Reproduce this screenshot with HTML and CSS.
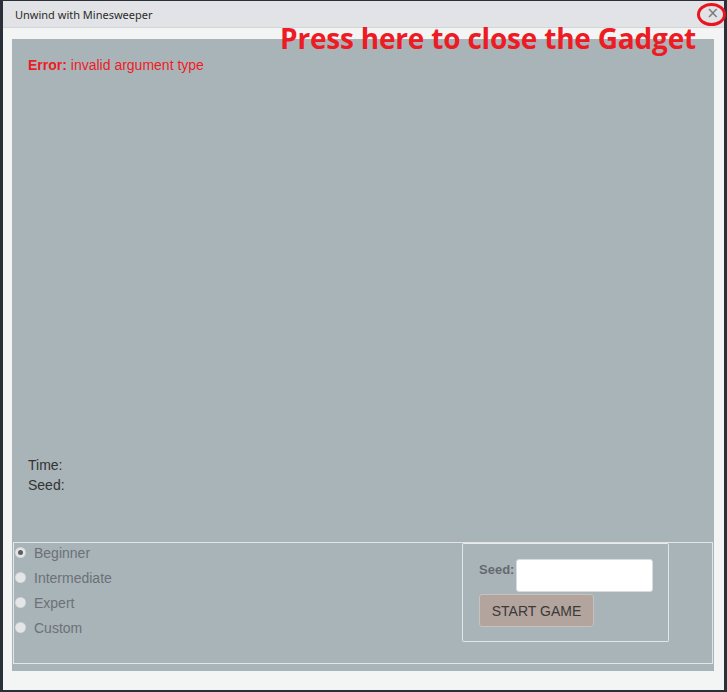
FILE: index.html
```html
<!DOCTYPE html>
<html>
<head>
<meta charset="utf-8">
<link rel="stylesheet" href="styles.css">
</head>
<body>
<div class="screen">
  <div class="dialog">
    <div class="titlebar">
      <span class="title">Unwind with Minesweeper</span>
      <span class="close">×</span>
      <span class="ring"></span>
    </div>
    <div class="hint">Press here to close the Gadget</div>
    <div class="body">
      <div class="panel">
        <div class="board">
          <div class="error"><b>Error:</b> invalid argument type</div>
          <div class="stats">
            <div>Time:</div>
            <div>Seed:</div>
          </div>
        </div>
        <div class="controls">
          <div class="levels">
            <label class="radio"><span class="dot checked"></span>Beginner</label>
            <label class="radio"><span class="dot"></span>Intermediate</label>
            <label class="radio"><span class="dot"></span>Expert</label>
            <label class="radio"><span class="dot"></span>Custom</label>
          </div>
          <div class="start">
            <div class="seedrow">
              <span class="seedlabel">Seed:</span>
              <span class="seedinput"></span>
            </div>
            <div class="btn">START GAME</div>
          </div>
        </div>
      </div>
    </div>
  </div>
</div>
</body>
</html>
```
FILE: styles.css
```css
html, body {
  margin: 0;
  padding: 0;
}
body {
  width: 727px;
  height: 692px;
  overflow: hidden;
  background: #2a3038;
  font-family: "Liberation Sans", Arial, sans-serif;
}
.screen {
  padding: 1px 3px 2px 3px;
  height: 692px;
  box-sizing: border-box;
}
.dialog {
  position: relative;
  background: #f3f4f4;
  height: 100%;
  display: flex;
  flex-direction: column;
}
.titlebar {
  position: relative;
  height: 27px;
  background: #e1e3e6;
  border-bottom: 1px solid #d3d5d8;
  display: flex;
  align-items: center;
  padding-left: 12px;
  box-sizing: border-box;
}
.title {
  font-family: "Noto Sans", "Open Sans", sans-serif;
  font-size: 11px;
  color: #2b2b2b;
}
.close {
  position: absolute;
  right: 5px;
  top: 4px;
  font-family: "DejaVu Sans", sans-serif;
  font-size: 15px;
  line-height: 16px;
  color: #74787c;
}
.ring {
  position: absolute;
  right: -2px;
  top: 2px;
  width: 23px;
  height: 17px;
  border: 3px solid #e8141f;
  border-radius: 50%;
}
.hint {
  position: absolute;
  left: 277px;
  top: 18px;
  font-family: "Open Sans", "Noto Sans", sans-serif;
  font-weight: 700;
  font-size: 28px;
  line-height: 38px;
  color: #ed1c24;
  z-index: 2;
  letter-spacing: -0.2px;
}
.body {
  flex: 1;
  padding: 11px 10px 19px 9px;
  display: flex;
}
.panel {
  flex: 1;
  background: #a9b4b9;
  display: flex;
  flex-direction: column;
  padding: 0 1px 7px 1px;
}
.board {
  flex: 1;
  padding: 18px 0 0 15px;
  display: flex;
  flex-direction: column;
  justify-content: space-between;
  padding-bottom: 47px;
}
.error {
  font-size: 14px;
  color: #ed1c24;
}
.error b {
  font-weight: 700;
}
.stats {
  font-size: 14px;
  color: #333;
  line-height: 20px;
}
.controls {
  height: 122px;
  border: 1px solid #e3e6e8;
  display: flex;
  justify-content: space-between;
  box-sizing: border-box;
  padding-right: 43px;
}
.levels {
  margin-top: -3px;
  display: flex;
  flex-direction: column;
}
.radio {
  display: flex;
  align-items: center;
  height: 25px;
  font-size: 14px;
  color: #6b7176;
}
.dot {
  width: 11px;
  height: 11px;
  border-radius: 50%;
  background: #e4e6e8;
  box-shadow: inset 0 0 1px #9aa0a4;
  margin: 0 8px 0 1px;
  position: relative;
}
.dot.checked::after {
  content: "";
  position: absolute;
  left: 3px;
  top: 3px;
  width: 5px;
  height: 5px;
  border-radius: 50%;
  background: #5b5f63;
}
.start {
  width: 207px;
  height: 99px;
  border: 1px solid #e3e6e8;
  border-top-color: #e8ebec;
  border-radius: 2px;
  box-sizing: border-box;
  padding: 15px 0 0 16px;
}
.seedrow {
  display: flex;
  align-items: flex-start;
}
.seedlabel {
  font-size: 13px;
  font-weight: 700;
  color: #656a6e;
  margin-top: 3px;
  margin-right: 2px;
}
.seedinput {
  width: 137px;
  height: 33px;
  background: #fff;
  border: 1px solid #d8dcde;
  border-radius: 3px;
  box-sizing: border-box;
}
.btn {
  margin-top: 2px;
  width: 115px;
  height: 33px;
  box-sizing: border-box;
  background: #b3a49d;
  border: 1px solid #c7c2bf;
  border-radius: 3px;
  font-size: 14px;
  color: #3a3a3a;
  display: flex;
  align-items: center;
  justify-content: center;
}
```
